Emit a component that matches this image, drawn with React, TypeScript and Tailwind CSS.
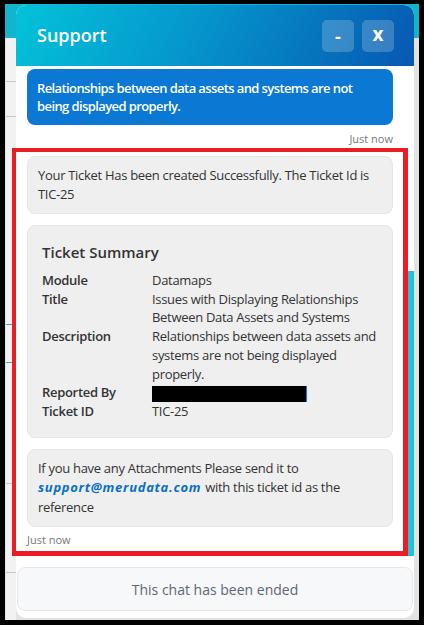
const rows = [
  { label: "Module", value: "Datamaps" },
  { label: "Title", value: "Issues with Displaying Relationships Between Data Assets and Systems" },
  { label: "Description", value: "Relationships between data assets and systems are not being displayed properly." },
  { label: "Reported By", value: null },
  { label: "Ticket ID", value: "TIC-25" },
]

const App = () => {
  return (
    <div className="w-[424px] h-[625px] bg-black pt-[4px] pl-[5px] pr-[5px] pb-[5px] font-['Open_Sans',sans-serif]">
      <div className="relative h-full pl-[11px] pt-[1px] bg-[linear-gradient(to_bottom,#12b6cc_0px,#12b6cc_34px,#e2e2e2_34px)]">
        {/* page behind the widget */}
        <div className="absolute left-[1px] top-[34px] w-[10px] bottom-0 bg-[#f2f2f2]">
          <div className="mt-[43px] h-px bg-[#c8c8c8]" />
          <div className="mt-[34px] h-px bg-[#c8c8c8]" />
          <div className="mt-[207px] h-px bg-[#1fb3c8]" />
          <div className="mt-[37px] h-px bg-[#1fb3c8]" />
          <div className="mt-[120px] h-px bg-[#c8c8c8]" />
          <div className="mt-[88px] h-px bg-[#c8c8c8]" />
        </div>

        <div className="relative w-[398px] h-[613px] bg-white rounded-[10px] overflow-hidden flex flex-col">
          <div className="h-[61px] shrink-0 flex items-center justify-between pl-[21px] pr-[20px] bg-[linear-gradient(115deg,#03c3d9_0%,#0595cc_45%,#0758b1_100%)]">
            <span className="text-white text-[18px] font-semibold">Support</span>
            <div className="flex gap-[8px]">
              <button className="w-[32px] h-[32px] rounded-[5px] bg-white/20 text-white font-bold text-[18px] leading-none">-</button>
              <button className="w-[32px] h-[32px] rounded-[5px] bg-white/20 text-white font-bold text-[19px] leading-none pb-[3px]">x</button>
            </div>
          </div>

          <div className="h-[494px] shrink-0 flex">
            <div className="flex-1 pl-[11px] pr-[15px] pt-[3px] flex flex-col text-[13px] tracking-[-0.3px] text-[#333]">
              <div className="bg-[#0b78d4] text-white font-semibold tracking-[-0.6px] rounded-[8px] px-[10px] py-[10px] leading-[18px]">
                Relationships between data assets and systems are not being displayed properly.
              </div>
              <div className="text-right text-[11px] tracking-normal text-[#777] mt-[6px] leading-[15px]">Just now</div>

              <div className="mt-[10px] bg-[#efefef] border border-[#e6e6e6] rounded-[8px] px-[10px] py-[9px] leading-[19px]">
                Your Ticket Has been created Successfully. The Ticket Id is TIC-25
              </div>

              <div className="mt-[11px] bg-[#efefef] border border-[#e6e6e6] rounded-[8px] pl-[14px] pr-[8px] pt-[15px] pb-[16px]">
                <div className="text-[15px] tracking-normal font-semibold leading-[22px] mb-[8px]">Ticket Summary</div>
                {rows.map((r) => (
                  <div key={r.label} className="flex leading-[18.7px]">
                    <div className="w-[110px] shrink-0 font-semibold">{r.label}</div>
                    <div className="flex-1">
                      {r.value ?? <span className="inline-block w-[155px] h-[16px] bg-black align-middle border-r border-[#1976d2]" />}
                    </div>
                  </div>
                ))}
              </div>

              <div className="mt-[11px] bg-[#efefef] border border-[#e6e6e6] rounded-[8px] px-[10px] py-[9px] leading-[19.5px]">
                If you have any Attachments Please send it to{" "}
                <span className="font-bold italic tracking-[0.7px] text-[#0a6fc8] pr-[1px]">support@merudata.com</span> with this ticket id as the reference
              </div>
              <div className="text-[11px] tracking-normal text-[#777] mt-[5px] leading-[15px]">Just now</div>
            </div>
            <div className="w-[6px] shrink-0 flex flex-col">
              <div className="h-[205px]" />
              <div className="h-[285px] bg-[#1ec3d8]" />
            </div>
          </div>

          <div className="mt-[7px] mx-[1px] h-[44px] shrink-0 bg-[#f6f8fa] border border-[#e4e7eb] rounded-[8px] flex items-center justify-center text-[14px] text-[#5f6672]">
            This chat has been ended
          </div>
        </div>

        {/* annotation box over the chat */}
        <div className="absolute left-[7px] top-[144px] w-[396px] h-[408px] border-[4px] border-b-[5px] border-r-[5px] border-[#ed1c24] pointer-events-none" />
      </div>
    </div>
  )
}

export default App
